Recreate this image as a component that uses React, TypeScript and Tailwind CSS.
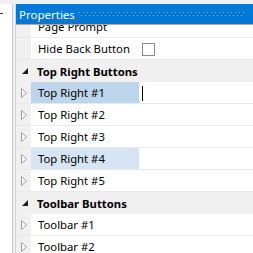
import React from "react";

const font = { fontFamily: '"Noto Sans", "Open Sans", sans-serif' };

function Hollow() {
  return (
    <svg width="7" height="10" viewBox="0 0 7 10" className="block">
      <path d="M0.5 0.5 L5.5 5 L0.5 9.5 Z" fill="white" stroke="#a0a0a0" strokeWidth="1" />
    </svg>
  );
}

function Solid() {
  return (
    <svg width="7" height="7" viewBox="0 0 7 7" className="block">
      <path d="M6 0 L6 6 L0 6 Z" fill="#1e1e1e" />
    </svg>
  );
}

function ItemRow({
  label,
  hl,
  caret,
  extra,
  className = "",
}: {
  label: string;
  hl?: string;
  caret?: boolean;
  extra?: React.ReactNode;
  className?: string;
}) {
  return (
    <div className={`flex h-[22px] shrink-0 border-b border-[#e8e8e8] ${className}`}>
      <div className="w-[15px] bg-[#f0f0f0] flex items-center justify-center pl-[1px] pt-[1px]">
        {caret !== false && <Hollow />}
      </div>
      <div className={`w-[108px] flex items-center pl-[7px] pt-[2px] text-[11.3px] text-black whitespace-nowrap ${hl ?? "bg-white"}`}>
        {label}
      </div>
      <div className="flex-1 bg-white flex items-center pl-[3px] pt-[1px]">{extra}</div>
    </div>
  );
}

function CatRow({ label }: { label: string }) {
  return (
    <div className="flex h-[22px] shrink-0 bg-[#f0f0f0] items-center">
      <div className="w-[15px] flex items-center justify-center pl-[3px] pt-[1px]">
        <Solid />
      </div>
      <div className="pl-[6px] pt-[2px] text-[11.3px] font-bold text-black whitespace-nowrap">{label}</div>
    </div>
  );
}

export default function App() {
  return (
    <div className="w-[253px] h-[253px] overflow-hidden bg-[#f0f0f0] flex" style={font}>
      <div className="w-[13px] mt-[4px] bg-white border-r border-[#c8c8c8] relative shrink-0">
        <div className="absolute left-0 top-[9px] w-[3px] h-[1px] bg-[#404040]" />
      </div>
      <div className="w-[2px] shrink-0" />
      <div className="flex-1 mt-[4px] flex flex-col border-l border-[#d4d4d4] min-w-0">
        <div className="h-[20px] bg-[#0078d7] flex items-center pl-[3px] pt-[1px] shrink-0">
          <span className="text-white text-[11.5px] leading-none whitespace-nowrap">Properties</span>
          <svg className="ml-[4px] flex-1 h-[5px] mr-[8px]" height="5">
            <defs>
              <pattern id="dots" width="4" height="5" patternUnits="userSpaceOnUse">
                <rect x="0" y="0" width="1" height="1" fill="#8cc0ec" />
                <rect x="2" y="3" width="1" height="1" fill="#8cc0ec" />
              </pattern>
            </defs>
            <rect x="0" y="0" width="100%" height="5" fill="url(#dots)" />
          </svg>
        </div>
        <div className="h-[1px] bg-[#a8a8a8] shrink-0" />
        <div className="flex-1 overflow-hidden flex flex-col">
          <ItemRow label="Page Prompt" caret={false} className="mt-[-9px]" />
          <ItemRow
            label="Hide Back Button"
            caret={false}
            extra={<div className="w-[13px] h-[13px] border border-[#8a8a8a] bg-white" />}
          />
          <CatRow label="Top Right Buttons" />
          <ItemRow
            label="Top Right #1"
            hl="bg-[#bdd5ea]"
            extra={<div className="w-[1px] h-[15px] bg-black" />}
          />
          <ItemRow label="Top Right #2" />
          <ItemRow label="Top Right #3" />
          <ItemRow label="Top Right #4" hl="bg-[#d5e5f3]" />
          <ItemRow label="Top Right #5" />
          <CatRow label="Toolbar Buttons" />
          <ItemRow label="Toolbar #1" />
          <ItemRow label="Toolbar #2" />
        </div>
      </div>
    </div>
  );
}
